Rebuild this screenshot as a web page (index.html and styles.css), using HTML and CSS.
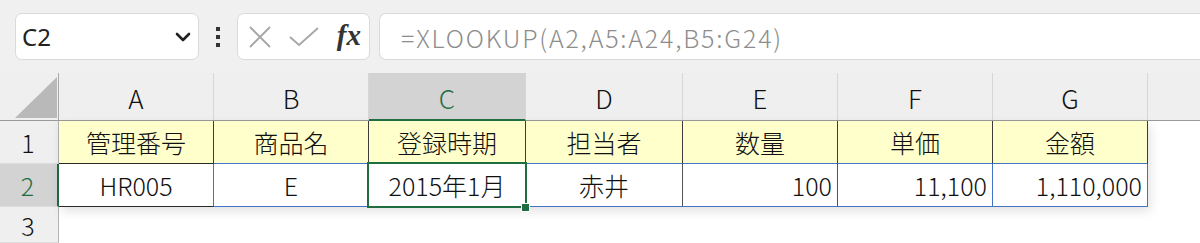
FILE: index.html
```html
<!DOCTYPE html>
<html lang="ja">
<head>
    <meta charset="UTF-8">
    <title>XLOOKUP</title>
    <link rel="stylesheet" href="styles.css">
</head>
<body>
    <div class="toolbar">
        <div class="namebox">
            <span>C2</span>
            <svg width="16" height="10" viewBox="0 0 16 10"><polyline points="2,2 8,8 14,2" fill="none" stroke="#222" stroke-width="2.6" stroke-linecap="round" stroke-linejoin="round"/></svg>
        </div>
        <div class="grip"><i></i><i></i><i></i></div>
        <div class="fxbox">
            <svg width="24" height="22" viewBox="0 0 24 22"><path d="M2 1 L22 21 M22 1 L2 21" stroke="#a6a6a6" stroke-width="1.8" fill="none"/></svg>
            <svg width="30" height="20" viewBox="0 0 30 20"><path d="M1 10 L10 18 L29 1" stroke="#a6a6a6" stroke-width="1.8" fill="none"/></svg>
            <span class="fx">fx</span>
        </div>
        <div class="formula">=XLOOKUP(A2,A5:A24,B5:G24)</div>
    </div>

    <div class="sheet">
        <div class="rowheads">
            <div class="corner"><svg width="42" height="41" viewBox="0 0 42 41"><polygon points="0,41 42,0 42,41" fill="#b9b9b9"/></svg></div>
            <div class="rh">1</div>
            <div class="rh sel">2</div>
            <div class="rh last">3</div>
        </div>
        <div class="cols">
            <div class="colheads">
                <div class="ch w155">A</div>
                <div class="ch w155">B</div>
                <div class="ch w157 sel">C</div>
                <div class="ch w157">D</div>
                <div class="ch w155">E</div>
                <div class="ch w155">F</div>
                <div class="ch w155">G</div>
                <div class="ch rest"></div>
            </div>
            <div class="block">
                <div class="row r1">
                    <div class="cell w155 dk">管理番号</div>
                    <div class="cell w155">商品名</div>
                    <div class="cell w157">登録時期</div>
                    <div class="cell w157">担当者</div>
                    <div class="cell w155">数量</div>
                    <div class="cell w155">単価</div>
                    <div class="cell w155">金額</div>
                </div>
                <div class="row r2">
                    <div class="cell w155 dk">HR005</div>
                    <div class="cell w155">E</div>
                    <div class="cell w157 active">2015年1月</div>
                    <div class="cell w157 dkr">赤井</div>
                    <div class="cell w155 num dkr">100</div>
                    <div class="cell w155 num">11,100</div>
                    <div class="cell w155 num">1,110,000</div>
                </div>
            </div>
        </div>
    </div>
</body>
</html>
```

FILE: styles.css
```css
body {
    margin: 0;
    width: 1200px;
    height: 243px;
    overflow: hidden;
    background: #fff;
    font-family: "Noto Sans CJK JP", sans-serif;
    font-weight: 300;
    color: #111;
}
.toolbar {
    height: 73px;
    box-sizing: border-box;
    padding: 13px 0 0 15px;
    background: #f0f0f0;
    display: flex;
    align-items: flex-start;
}
.toolbar > * {
    flex-shrink: 0;
}
.namebox, .fxbox, .formula {
    height: 47px;
    box-sizing: border-box;
    background: #fff;
    border: 1px solid #dadada;
    border-radius: 7px;
    display: flex;
    align-items: center;
}
.namebox {
    width: 184px;
    padding: 0 7px 0 6px;
    justify-content: space-between;
    font-family: "Noto Sans", sans-serif;
    font-weight: 400;
    font-size: 24px;
    color: #222;
}
.grip {
    width: 38px;
    height: 47px;
    display: flex;
    flex-direction: column;
    align-items: center;
    justify-content: center;
    gap: 4px;
}
.grip i {
    width: 4px;
    height: 4px;
    background: #333;
}
.fxbox {
    width: 133px;
    padding: 0 8px 0 10px;
    justify-content: space-between;
}
.fx {
    font-family: "Liberation Serif", serif;
    font-style: italic;
    font-weight: bold;
    font-size: 29px;
    color: #333;
    margin-top: -2px;
}
.formula {
    margin-left: 9px;
    flex: 1;
    flex-shrink: 1;
    min-width: 0;
    border-right-width: 0;
    border-radius: 7px 0 0 7px;
    padding-left: 21px;
    font-size: 25px;
    letter-spacing: 1.8px;
    color: #8d8d8d;
    white-space: nowrap;
}

.sheet {
    display: flex;
}
.rowheads {
    width: 59px;
    flex-shrink: 0;
}
.corner {
    height: 48px;
    box-sizing: border-box;
    background: #efefef;
    border-right: 1px solid #a8a8a8;
    border-bottom: 1px solid #9a9a9a;
    padding: 4px 0 0 15px;
}
.rh {
    height: 43px;
    box-sizing: border-box;
    background: #efefef;
    border-right: 1px solid #b4b4b4;
    border-bottom: 1px solid #dcdcdc;
    display: flex;
    align-items: center;
    justify-content: center;
    font-size: 25px;
    padding-right: 2px;
}
.rh.last {
    height: 36px;
    align-items: flex-start;
    padding-top: 2px;
    line-height: 1.3;
}
.rh.sel {
    background: #d3d3d3;
    border-right: 2px solid #1e6e42;
    color: #1e6e42;
}
.cols {
    flex: 1;
}
.colheads {
    height: 48px;
    display: flex;
    background: #efefef;
    border-bottom: 1px solid #9a9a9a;
    box-sizing: border-box;
}
.ch {
    box-sizing: border-box;
    border-right: 1px solid #d6d6d6;
    display: flex;
    align-items: center;
    justify-content: center;
    font-size: 26px;
    padding-top: 2px;
}
.ch.sel {
    background: #d3d3d3;
    color: #1e6e42;
    border-bottom: 2px solid #1e6e42;
    margin-bottom: -1px;
}
.ch.rest {
    flex: 1;
    border-right: none;
}
.w155 { width: 155px; flex-shrink: 0; }
.w157 { width: 157px; flex-shrink: 0; }
.block {
    width: 1089px;
    box-shadow: 2px 4px 10px rgba(0, 0, 0, 0.12);
}
.row {
    height: 43px;
    display: flex;
}
.cell {
    box-sizing: border-box;
    display: flex;
    align-items: center;
    justify-content: center;
    font-size: 25px;
    padding-bottom: 1px;
}
.r1 .cell {
    background: #ffffcc;
    border-right: 1px solid #3c3c3c;
    border-bottom: 1px solid #4472c4;
}
.r1 .cell.dk {
    border-bottom-color: #2a2a2a;
}
.r2 .cell {
    background: #fff;
    border-right: 1px solid #4472c4;
    border-bottom: 1px solid #4472c4;
}
.r2 .cell.dk {
    border-bottom-color: #2a2a2a;
}
.r2 .cell.dkr {
    border-right-color: #555;
}
.cell.num {
    justify-content: flex-end;
    padding-right: 5px;
}
.cell.active {
    position: relative;
}
.cell.active::before {
    content: "";
    position: absolute;
    left: -2px;
    top: -2px;
    right: -2px;
    bottom: -2px;
    border: 2px solid #1e6e42;
}
.cell.active::after {
    content: "";
    position: absolute;
    right: -4px;
    bottom: -5px;
    width: 7px;
    height: 7px;
    background: #1e6e42;
    border: 1px solid #fff;
    box-sizing: content-box;
    margin: -1px;
}
```
